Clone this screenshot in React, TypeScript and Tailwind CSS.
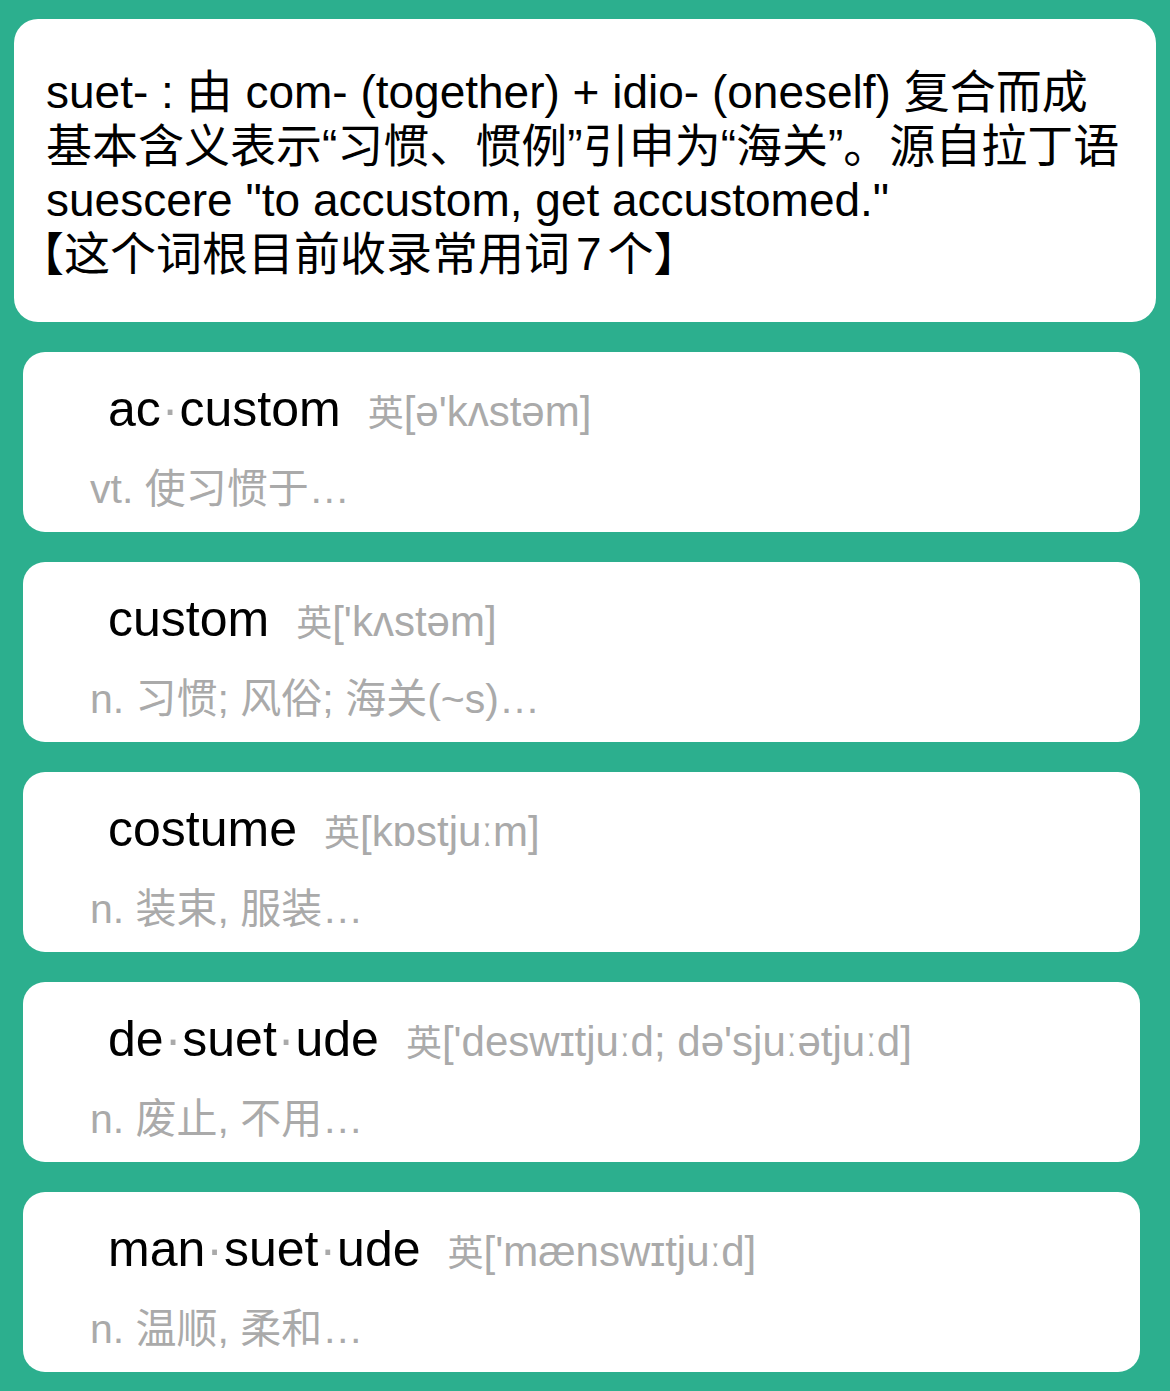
import React from 'react';

const FONT = { fontFamily: '"Liberation Sans", "Noto Sans CJK SC", sans-serif' };

type Word = { parts: string[]; phonetic: string; meaning: string };

const words: Word[] = [
  { parts: ['ac', 'custom'], phonetic: "[ə'kʌstəm]", meaning: 'vt. 使习惯于…' },
  { parts: ['custom'], phonetic: "['kʌstəm]", meaning: 'n. 习惯; 风俗; 海关(~s)…' },
  { parts: ['costume'], phonetic: '[kɒstjuːm]', meaning: 'n. 装束, 服装…' },
  { parts: ['de', 'suet', 'ude'], phonetic: "['deswɪtjuːd; də'sjuːətjuːd]", meaning: 'n. 废止, 不用…' },
  { parts: ['man', 'suet', 'ude'], phonetic: "['mænswɪtjuːd]", meaning: 'n. 温顺, 柔和…' },
];

const WordCard = ({ word }: { word: Word }) => {
  return (
    <div className="ml-[23px] mr-[30px] h-[180px] rounded-[22px] bg-white pt-[32px]">
      <div className="flex items-baseline pl-[85px] leading-none whitespace-nowrap">
        <span className="text-[50px] text-black">
          {word.parts.map((p, i) => (
            <React.Fragment key={i}>
              {i > 0 && <span className="mx-[1px] text-[#aaaaaa]">·</span>}
              {p}
            </React.Fragment>
          ))}
        </span>
        <span className="ml-[27px] text-[42px] text-[#aaaaaa]">
          <span className="text-[36px]">英</span>
          {word.phonetic}
        </span>
      </div>
      <div className="mt-[35px] pl-[67px] text-[41px] leading-none text-[#aaaaaa] whitespace-nowrap">
        {word.meaning}
      </div>
    </div>
  );
};

const App = () => {
  return (
    <div className="min-h-screen bg-[#2caf8e] pt-[19px] pb-[19px]" style={FONT}>
      <div className="mx-[14px] rounded-[24px] bg-white pt-[46px] pb-[41px] pl-[32px] text-[46px] leading-[54px] text-black whitespace-nowrap">
        <div>suet- : 由 com- (together) + idio- (oneself) 复合而成</div>
        <div>基本含义表示“习惯、惯例”引申为“海关”。源自拉丁语</div>
        <div>suescere "to accustom, get accustomed."</div>
        <div className="-ml-[28px]">
          【这个词根目前收录常用词<span className="mx-[6px]">7</span>个】
        </div>
      </div>
      <div className="mt-[30px] flex flex-col gap-[30px]">
        {words.map((w, i) => (
          <WordCard key={i} word={w} />
        ))}
      </div>
    </div>
  );
};

export default App;
